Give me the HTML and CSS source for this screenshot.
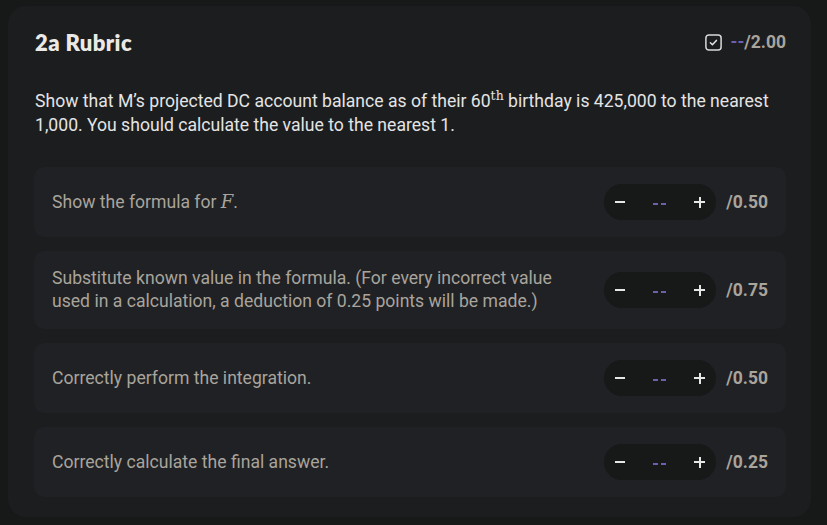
FILE: index.html
```html
<!DOCTYPE html>
<html lang="en">
<head>
<meta charset="utf-8">
<title>2a Rubric</title>
<link rel="stylesheet" href="styles.css">
</head>
<body>
<section class="card">
  <header class="card-head">
    <h2 class="title">2a Rubric</h2>
    <div class="total">
      <svg class="check" width="17" height="17" viewBox="0 0 17 17" aria-hidden="true">
        <rect x="0.9" y="0.9" width="15.2" height="15.2" rx="3" fill="none" stroke="#d9d9d9" stroke-width="1.5"/>
        <path d="M5.4 8.8 L7.4 10.7 L11.4 6.4" fill="none" stroke="#e6e6e6" stroke-width="1.5" stroke-linecap="round" stroke-linejoin="round"/>
      </svg>
      <span class="score"><span class="dash">--</span>/2.00</span>
    </div>
  </header>
  <p class="question">Show that M’s projected DC account balance as of their 60<sup class="math-sup">th</sup> birthday is 425,000 to the nearest 1,000. You should calculate the value to the nearest 1.</p>
  <ul class="items">
    <li class="item">
      <span class="item-text">Show the formula for <span class="math">F</span>.</span>
      <div class="controls">
        <div class="stepper"><span class="minus"></span><span class="step-dash"><i></i><i></i></span><span class="plus"></span></div>
        <span class="max">/0.50</span>
      </div>
    </li>
    <li class="item">
      <span class="item-text">Substitute known value in the formula. (For every incorrect value used in a calculation, a deduction of 0.25 points will be made.)</span>
      <div class="controls">
        <div class="stepper"><span class="minus"></span><span class="step-dash"><i></i><i></i></span><span class="plus"></span></div>
        <span class="max">/0.75</span>
      </div>
    </li>
    <li class="item">
      <span class="item-text">Correctly perform the integration.</span>
      <div class="controls">
        <div class="stepper"><span class="minus"></span><span class="step-dash"><i></i><i></i></span><span class="plus"></span></div>
        <span class="max">/0.50</span>
      </div>
    </li>
    <li class="item">
      <span class="item-text">Correctly calculate the final answer.</span>
      <div class="controls">
        <div class="stepper"><span class="minus"></span><span class="step-dash"><i></i><i></i></span><span class="plus"></span></div>
        <span class="max">/0.25</span>
      </div>
    </li>
  </ul>
</section>
</body>
</html>
```
FILE: styles.css
```css
* { box-sizing: border-box; }
html, body { height: 100%; }
body {
  margin: 0;
  background: #171818;
  font-family: Roboto, "Liberation Sans", sans-serif;
  color: #e6e6e6;
  padding: 6px 16px 0 8px;
}
.card {
  background: #1c1d1f;
  border-radius: 18px;
  padding: 22px 25px 20px 26px;
  height: 511px;
}
.card-head {
  display: flex;
  justify-content: space-between;
  align-items: center;
  height: 28px;
}
.title {
  margin: 0 0 0 1px;
  font-family: Lato, "Open Sans", sans-serif;
  font-weight: 800;
  font-size: 22px;
  color: #ebe9e6;
  letter-spacing: 0.4px;
}
.total {
  display: flex;
  align-items: center;
  gap: 9px;
}
.check { display: block; }
.score {
  font-weight: 700;
  font-size: 17.5px;
  color: #a9a49c;
}
.dash { color: #6c5fb0; font-weight: 700; }
.question {
  margin: 33px 0 30px 1px;
  font-size: 17.6px;
  line-height: 24px;
  color: #e4e4e4;
}
.math-sup {
  font-family: "DejaVu Serif", "Liberation Serif", serif;
  font-size: 12.5px;
  vertical-align: 7px;
  line-height: 0;
}
.math {
  font-family: "DejaVu Serif", "Liberation Serif", serif;
  font-style: italic;
  font-size: 18px;
}
.items {
  list-style: none;
  margin: 0;
  padding: 0;
  display: flex;
  flex-direction: column;
  gap: 14px;
}
.item {
  background: #202124;
  border-radius: 10px;
  min-height: 70px;
  padding: 16px 18px;
  display: flex;
  align-items: center;
  justify-content: space-between;
  gap: 30px;
}
.item-text {
  font-size: 17.6px;
  line-height: 23px;
  color: #a9a49c;
  max-width: 510px;
}
.controls {
  display: flex;
  align-items: center;
  gap: 10px;
  flex-shrink: 0;
}
.stepper {
  width: 112px;
  height: 36px;
  border-radius: 18px;
  background: #171818;
  display: flex;
  align-items: center;
  justify-content: space-between;
  padding: 0 11px 0 11px;
}
.step-dash {
  display: flex;
  gap: 3px;
  margin-top: 3px;
}
.step-dash i {
  display: block;
  width: 5px;
  height: 2px;
  background: #6c5fb0;
}
.minus {
  width: 10px;
  height: 2px;
  background: #e6e6e6;
}
.plus {
  position: relative;
  width: 11px;
  height: 11px;
}
.plus::before, .plus::after {
  content: "";
  position: absolute;
  background: #e6e6e6;
}
.plus::before { left: 0; top: 4.5px; width: 11px; height: 2px; }
.plus::after { left: 4.5px; top: 0; width: 2px; height: 11px; }
.max {
  font-weight: 700;
  font-size: 17.5px;
  color: #a9a49c;
}
```
